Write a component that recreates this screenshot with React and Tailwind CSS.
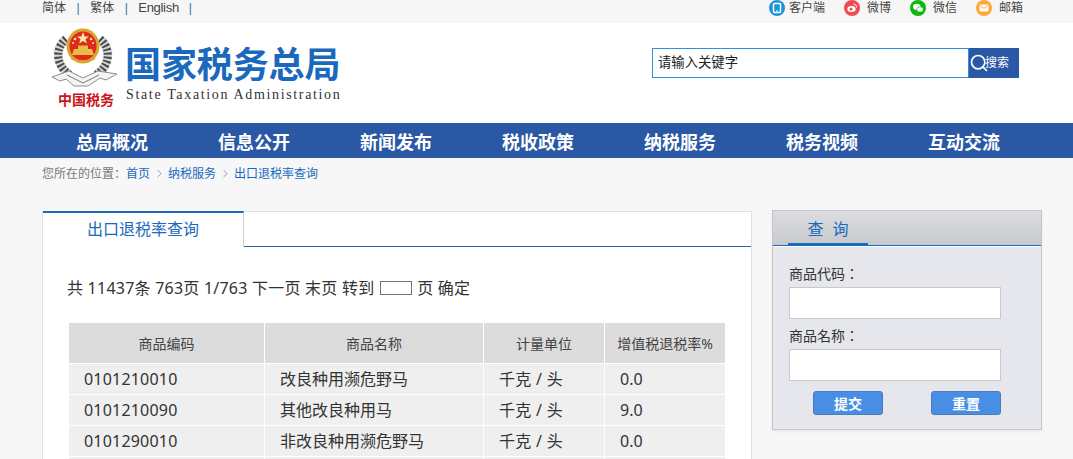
import { ChevronRight, Search } from 'lucide-react';

const FONT = "font-['Liberation_Sans','Noto_Sans_CJK_SC',sans-serif]";

const navItems = ['总局概况', '信息公开', '新闻发布', '税收政策', '纳税服务', '税务视频', '互动交流'];

const rows = [
  ['0101210010', '改良种用濒危野马', '千克 / 头', '0.0'],
  ['0101210090', '其他改良种用马', '千克 / 头', '9.0'],
  ['0101290010', '非改良种用濒危野马', '千克 / 头', '0.0'],
];

const Emblem = () => (
  <svg width="65" height="60" viewBox="0 0 65 60" className="block">
    {/* wreath */}
    <path d="M14 11 C3 20 3 37 18 47" fill="none" stroke="#d5d5d5" strokeWidth="9" />
    <path d="M14 11 C3 20 3 37 18 47" fill="none" stroke="#4a4a4a" strokeWidth="8" strokeDasharray="2 2" />
    <path d="M48 11 C59 20 59 37 44 47" fill="none" stroke="#d5d5d5" strokeWidth="9" />
    <path d="M48 11 C59 20 59 37 44 47" fill="none" stroke="#4a4a4a" strokeWidth="8" strokeDasharray="2 2" />
    {/* ribbon */}
    <path d="M0 49 L17 43 L31 50 L46 43 L65 46 L54 52 L48 50 L36 58 L22 58 L14 51 L8 53 Z" fill="#f4f4f2" stroke="#8c8c8c" strokeWidth="1" />
    <path d="M15 47 L31 55 L47 47" fill="none" stroke="#777" strokeWidth="1" />
    {/* badge */}
    <ellipse cx="31" cy="18" rx="16.5" ry="17.5" fill="#d9a62e" />
    <ellipse cx="31" cy="18" rx="13.5" ry="14.5" fill="#e02a1c" />
    <path d="M31 4 L32.6 8.5 L37 8.5 L33.5 11.3 L34.8 15.5 L31 13 L27.2 15.5 L28.5 11.3 L25 8.5 L29.4 8.5 Z" fill="#f7e8a8" />
    <circle cx="23" cy="11" r="1.3" fill="#f7e8a8" />
    <circle cx="39" cy="11" r="1.3" fill="#f7e8a8" />
    <circle cx="21" cy="15" r="1" fill="#f7e8a8" />
    <circle cx="41" cy="15" r="1" fill="#f7e8a8" />
    <path d="M22 21 H40 L42 27 H20 Z" fill="#e8bd4a" />
    <path d="M26 17.5 H36 V21 H26 Z" fill="#e8bd4a" />
    <path d="M19 30 C25 34 37 34 43 30" fill="none" stroke="#d9a62e" strokeWidth="2" />
  </svg>
);

const TopIcon = ({ bg, children }) => (
  <span className={`flex h-4 w-4 items-center justify-center rounded-full ${bg}`}>
    <svg width="12" height="12" viewBox="0 0 12 12">{children}</svg>
  </span>
);

const links = [
  {
    label: '客户端',
    gap: 'gap-[4px]',
    icon: (
      <TopIcon bg="bg-[#1a94dc]">
        <rect x="2.5" y="1.5" width="7" height="9" rx="1" fill="none" stroke="#fff" strokeWidth="1.5" />
        <path d="M5 9 H7" stroke="#fff" />
      </TopIcon>
    ),
  },
  {
    label: '微博',
    gap: 'gap-[7px]',
    icon: (
      <TopIcon bg="bg-[#ee4a50]">
        <ellipse cx="5.5" cy="7" rx="4.2" ry="3" fill="#fff" />
        <circle cx="5" cy="7.2" r="1.4" fill="#ee4a50" />
        <path d="M7.5 2.2 C9.5 2 11 3.6 10.4 5.6" fill="none" stroke="#fff" />
      </TopIcon>
    ),
  },
  {
    label: '微信',
    gap: 'gap-[7px]',
    icon: (
      <TopIcon bg="bg-[#0bb90e]">
        <ellipse cx="4.8" cy="4.8" rx="3.8" ry="3.1" fill="#fff" />
        <ellipse cx="8" cy="7.4" rx="3.2" ry="2.6" fill="#fff" stroke="#0bb90e" strokeWidth="0.6" />
      </TopIcon>
    ),
  },
  {
    label: '邮箱',
    gap: 'gap-[7px]',
    icon: (
      <TopIcon bg="bg-[#fda734]">
        <rect x="1.5" y="2.5" width="9" height="7" rx="1" fill="#fff" />
        <path d="M2 3.5 L6 6.5 L10 3.5" fill="none" stroke="#fda734" />
      </TopIcon>
    ),
  },
];

const HeadCell = ({ children }) => (
  <div className="flex h-[40px] items-center justify-center bg-[#dcdcdc] pt-[1px] text-[14px] text-[#444]">{children}</div>
);

const Cell = ({ children, className = '' }) => (
  <div className={`flex h-[30px] items-center bg-[#efefef] pl-[15px] text-[16px] text-[#333] ${className}`}>{children}</div>
);

const Crumb = () => (
  <span className="flex w-[18px] justify-center text-[#7f7fb8]">
    <ChevronRight size={13} strokeWidth={1.5} />
  </span>
);

export default function App() {
  return (
    <div className={`h-[459px] overflow-hidden bg-[#f7f7f7] ${FONT}`}>
      {/* top bar */}
      <div className="flex h-[23px] items-start justify-between bg-[#f6f6f6] pl-[42px] pr-[50px]">
        <div className="flex h-[15px] items-center text-[12px] text-[#444]">
          <span>简体</span>
          <span className="mx-[10.5px] text-[#2a6fb5]">|</span>
          <span>繁体</span>
          <span className="mx-[10.5px] text-[#2a6fb5]">|</span>
          <span className="text-[13px] tracking-[-0.3px]">English</span>
          <span className="ml-[10px] text-[#2a6fb5]">|</span>
        </div>
        <div className="flex h-[15px] items-center gap-[19px] text-[12px] text-[#444]">
          {links.map(l => (
            <div key={l.label} className={`flex items-center ${l.gap}`}>
              {l.icon}
              <span>{l.label}</span>
            </div>
          ))}
        </div>
      </div>

      {/* logo + search */}
      <div className="flex h-[100px] justify-between bg-white pl-[52px] pr-[54px]">
        <div className="flex">
          <div className="flex w-[73px] flex-col pt-[5px]">
            <Emblem />
            <span className="ml-[6px] mt-[3px] text-[14px] font-bold leading-[18px] text-[#c8161d] whitespace-nowrap">中国税务</span>
          </div>
          <div className="pt-[22px]">
            <div className="text-[36px] font-bold leading-[42px] tracking-[-0.1px] text-[#1a69bd] whitespace-nowrap">国家税务总局</div>
            <div className="ml-[1px] font-['Liberation_Serif',serif] text-[14px] leading-[16px] tracking-[1.65px] text-[#333] whitespace-nowrap">State Taxation Administration</div>
          </div>
        </div>
        <div className="mt-[25px] flex h-[30px]">
          <div className="flex w-[317px] items-center border border-[#2f8fe0] bg-white pl-[5px] text-[13.33px] text-[#222]">请输入关键字</div>
          <div className="flex w-[50px] items-center bg-[#2a58a4] text-[12px] text-white">
            <Search size={20} strokeWidth={2} className="shrink-0" />
            <span className="-ml-[4px]">搜索</span>
          </div>
        </div>
      </div>

      {/* nav */}
      <div className="flex h-[35px] items-center bg-[#2a58a4] pl-[76px] pt-[5px] text-[18px] font-bold text-white">
        {navItems.map(n => (
          <span key={n} className="w-[142px] shrink-0">{n}</span>
        ))}
      </div>

      {/* breadcrumb */}
      <div className="flex h-[30px] items-center pl-[42px] pt-[1px] text-[12px] text-[#777]">
        您所在的位置：
        <span className="text-[#1a69bd]">首页</span>
        <Crumb />
        <span className="text-[#1a69bd]">纳税服务</span>
        <Crumb />
        <span className="text-[#1a69bd]">出口退税率查询</span>
      </div>

      <div className="mt-[23px] flex items-start pl-[42px]">
        {/* main panel */}
        <div className="h-[300px] w-[710px] shrink-0 border border-t-0 border-[#dfdfdf] bg-white">
          <div className="flex h-[36px]">
            <div className="flex w-[201px] items-center justify-center border-t-2 border-r border-t-[#1a69bd] border-r-[#cfcfcf] bg-white text-[16px] text-[#1a69bd]">
              出口退税率查询
            </div>
            <div className="flex-1 border-t border-b border-t-[#dfdfdf] border-b-[#1a69bd]" />
          </div>
          <div className="flex h-[76px] items-center whitespace-pre pl-[24px] pt-[6px] font-['Noto_Sans','Noto_Sans_CJK_SC',sans-serif] text-[16px] tracking-[0.23px] text-[#333]">
            共 11437条 763页 1/763 下一页 末页 转到 <span className="mx-[1px] inline-block h-[14px] w-[32px] border border-[#777]" /> 页 确定
          </div>
          <div className="ml-[26px] grid w-[656px] grid-cols-[195px_218px_120px_120px] gap-px font-['Noto_Sans','Noto_Sans_CJK_SC',sans-serif]">
            <HeadCell>商品编码</HeadCell>
            <HeadCell>商品名称</HeadCell>
            <HeadCell>计量单位</HeadCell>
            <HeadCell>增值税退税率%</HeadCell>
            {rows.map(r => (
              <div key={r[0]} className="contents">
                <Cell className="tracking-[0.2px]">{r[0]}</Cell>
                <Cell>{r[1]}</Cell>
                <Cell className="tracking-[0.3px]">{r[2]}</Cell>
                <Cell>{r[3]}</Cell>
              </div>
            ))}
            {/* next row is only just visible at the bottom edge */}
            <Cell />
            <Cell />
            <Cell />
            <Cell />
          </div>
        </div>

        {/* query panel */}
        <div className="ml-[20px] mt-[-1px] h-[220px] w-[270px] shrink-0 border border-[#c4c5c9] bg-[#e6e7ec] shadow-[0_2px_3px_rgba(0,0,0,0.05)]">
          <div className="h-[35px] border-b border-[#1a69bd] bg-gradient-to-b from-[#dcdde0] to-[#c8c9cc] pl-[15px]">
            <div className="flex h-[35px] w-[80px] items-center justify-center whitespace-pre border-b-[3px] border-[#1a69bd] pt-[6px] text-[16px] text-[#1a69bd]">
              查  询
            </div>
          </div>
          <div className="border-t border-white pl-[16px] pt-[16px] font-['Noto_Sans_CJK_TC',sans-serif] text-[14px] text-[#333]">
            <div className="h-[24px] leading-[20px]">商品代码：</div>
            <div className="h-[32px] w-[212px] border border-[#c9c9c9] bg-white" />
            <div className="mt-[6px] h-[24px] leading-[20px]">商品名称：</div>
            <div className="h-[32px] w-[212px] border border-[#c9c9c9] bg-white" />
            <div className="mt-[10px] flex w-[212px] justify-between pl-[24px]">
              <div className="flex h-[24px] w-[70px] items-center justify-center rounded-[3px] border border-[#4f7cb8] bg-[#488ee4] text-[14px] font-bold text-white">提交</div>
              <div className="flex h-[24px] w-[70px] items-center justify-center rounded-[3px] border border-[#4f7cb8] bg-[#488ee4] text-[14px] font-bold text-white">重置</div>
            </div>
          </div>
        </div>
      </div>
    </div>
  );
}
